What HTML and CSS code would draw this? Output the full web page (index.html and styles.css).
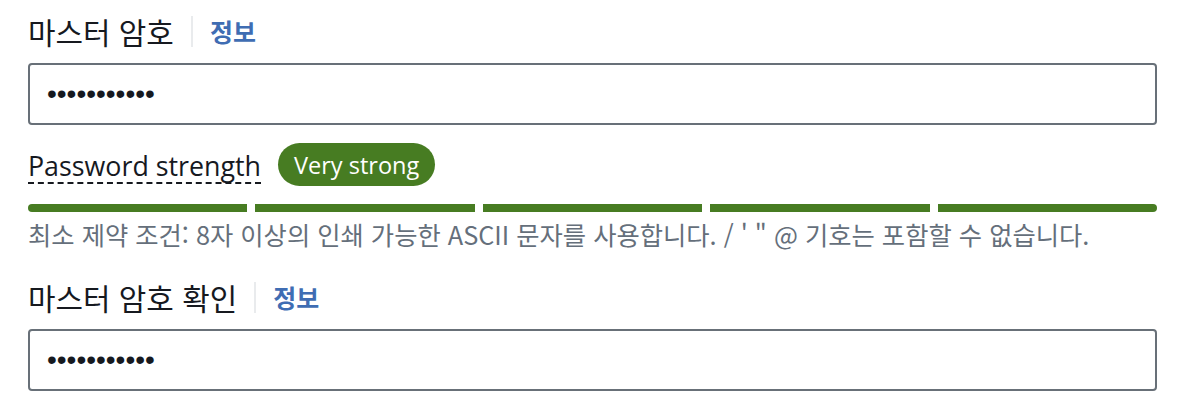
FILE: index.html
```html
<!DOCTYPE html>
<html lang="ko">
<head>
<meta charset="utf-8">
<link rel="stylesheet" href="styles.css">
</head>
<body>
<div class="form">
  <div class="field">
    <div class="label-row">
      <span class="label">마스터 암호</span>
      <span class="sep"></span>
      <a class="info">정보</a>
    </div>
    <div class="input"><span class="dots">•••••••••••</span></div>
  </div>

  <div class="strength-row">
    <span class="strength-label">Password strength</span>
    <span class="badge">Very strong</span>
  </div>
  <div class="bars">
    <span class="bar"></span>
    <span class="bar"></span>
    <span class="bar"></span>
    <span class="bar"></span>
    <span class="bar"></span>
  </div>
  <div class="hint">최소 제약 조건: 8자 이상의 인쇄 가능한 ASCII 문자를 사용합니다. / ' " @ 기호는 포함할 수 없습니다.</div>

  <div class="field second">
    <div class="label-row">
      <span class="label">마스터 암호 확인</span>
      <span class="sep"></span>
      <a class="info">정보</a>
    </div>
    <div class="input"><span class="dots">•••••••••••</span></div>
  </div>
</div>
</body>
</html>
```

FILE: styles.css
```css
html, body {
  margin: 0;
  padding: 0;
  background: #ffffff;
}

body {
  font-family: "Open Sans", "Noto Sans CJK KR", sans-serif;
  color: #16191f;
}

.form {
  padding: 14px 28px 0 28px;
  display: flex;
  flex-direction: column;
}

.label-row {
  display: flex;
  align-items: center;
  height: 34px;
}

.label {
  font-family: "Noto Sans CJK KR", sans-serif;
  font-size: 29.9px;
  line-height: 34px;
  color: #16191f;
}

.sep {
  width: 2px;
  height: 31px;
  background: #e9ebed;
  margin: 0 17px;
}

.info {
  font-family: "Noto Sans CJK KR", sans-serif;
  font-weight: 700;
  font-size: 25px;
  line-height: 34px;
  color: #3f6db3;
}

.input {
  margin-top: 15px;
  height: 62px;
  box-sizing: border-box;
  border: 2px solid #687078;
  border-radius: 4px;
  display: flex;
  align-items: center;
  padding-left: 17px;
}

.dots {
  font-family: "Liberation Sans", sans-serif;
  font-size: 28px;
  line-height: 30px;
  color: #16191f;
}

.strength-row {
  margin-top: 18px;
  display: flex;
  align-items: center;
  height: 43px;
}

.strength-label {
  font-size: 26.8px;
  line-height: 32px;
  margin-top: 4px;
  border-bottom: 2px dashed #16191f;
}

.badge {
  margin-left: 17px;
  height: 43px;
  padding: 0 16px;
  border-radius: 22px;
  background: #477c22;
  color: #ffffff;
  font-size: 23.5px;
  display: flex;
  align-items: center;
}

.bars {
  margin-top: 18px;
  display: flex;
  gap: 8px;
  height: 8px;
}

.bar {
  flex: 1;
  background: #477c22;
}

.bar:first-child {
  border-radius: 4px 0 0 4px;
}

.bar:last-child {
  border-radius: 0 4px 4px 0;
}

.hint {
  margin-top: 6px;
  font-family: "Noto Sans CJK KR", sans-serif;
  font-size: 25.3px;
  line-height: 32px;
  color: #656f7b;
}

.second {
  margin-top: 30px;
}
```
